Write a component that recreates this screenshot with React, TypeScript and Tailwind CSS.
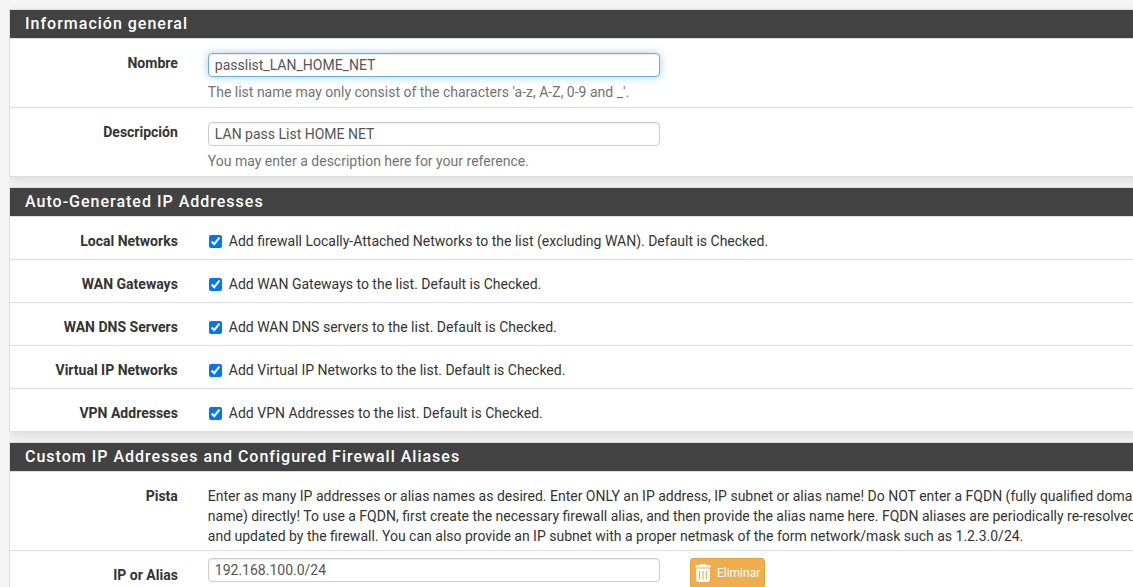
import { useId, useState, type ReactNode } from "react";
import { FaTrashCan } from "react-icons/fa6";

function Panel({ title, children }: { title: string; children: ReactNode }) {
  return (
    <section className="border border-[#ddd] bg-white shadow-[0_4px_10px_0_rgba(0,0,0,0.1)]">
      <h2 className="bg-[#424242] px-[15px] py-1 text-base leading-5 font-medium tracking-[1px] text-white">{title}</h2>
      {children}
    </section>
  );
}

function Row({ label, htmlFor, children }: { label: string; htmlFor?: string; children: ReactNode }) {
  const labelClass = "col-span-2 block px-[15px] pt-3.5 text-right font-bold";
  return (
    <div className="border-t border-[#ddd]">
      <div className="-mx-2.5 grid grid-cols-12">
        {htmlFor ? (
          <label htmlFor={htmlFor} className={labelClass}>
            {label}
          </label>
        ) : (
          <div className={labelClass}>{label}</div>
        )}
        {children}
      </div>
    </div>
  );
}

const inputClass =
  "block h-6 w-full rounded border border-[#ccc] bg-white px-1.5 text-sm text-[#555] shadow-[inset_0_1px_1px_rgba(0,0,0,0.075)] outline-none";
const focusedClass =
  "block h-6 w-full rounded border border-[#66afe9] bg-white px-1.5 text-sm text-[#555] shadow-[inset_0_1px_1px_rgba(0,0,0,0.075),0_0_8px_rgba(102,175,233,0.6)] outline-none";

function TextRow({ label, initial, help, active }: { label: string; initial: string; help: string; active?: boolean }) {
  const id = useId();
  const [value, setValue] = useState(initial);
  return (
    <Row label={label} htmlFor={id}>
      <div className="col-span-5 px-[15px] pt-3.5 pb-[5px]">
        <input
          id={id}
          type="text"
          value={value}
          onChange={(e) => setValue(e.target.value)}
          className={active ? focusedClass : inputClass}
        />
        <p className="mt-[5px] text-[#737373]">{help}</p>
      </div>
    </Row>
  );
}

function CheckRow({ label, text }: { label: string; text: string }) {
  const id = useId();
  return (
    <Row label={label} htmlFor={id}>
      <div className="col-span-10 px-[15px] pt-3.5 pb-2">
        <label className="flex items-center">
          <input id={id} type="checkbox" defaultChecked className="mr-[7px] ml-px size-[13px]" />
          <span>{text}</span>
        </label>
      </div>
    </Row>
  );
}

export default function App() {
  const aliasId = useId();
  const [alias, setAlias] = useState("192.168.100.0/24");
  return (
    <main className="h-screen overflow-hidden bg-[#f5f5f5] pl-[9px] font-['Roboto',sans-serif] text-sm leading-5 text-[#333]">
      <div className="-mr-[15px] flex flex-col gap-2.5 overflow-hidden pt-[9px]">
        <Panel title="Información general">
          <TextRow
            label="Nombre"
            initial="passlist_LAN_HOME_NET"
            help="The list name may only consist of the characters 'a-z, A-Z, 0-9 and _'."
            active
          />
          <TextRow
            label="Descripción"
            initial="LAN pass List HOME NET"
            help="You may enter a description here for your reference."
          />
        </Panel>

        <Panel title="Auto-Generated IP Addresses">
          <CheckRow
            label="Local Networks"
            text="Add firewall Locally-Attached Networks to the list (excluding WAN). Default is Checked."
          />
          <CheckRow label="WAN Gateways" text="Add WAN Gateways to the list. Default is Checked." />
          <CheckRow label="WAN DNS Servers" text="Add WAN DNS servers to the list. Default is Checked." />
          <CheckRow label="Virtual IP Networks" text="Add Virtual IP Networks to the list. Default is Checked." />
          <CheckRow label="VPN Addresses" text="Add VPN Addresses to the list. Default is Checked." />
        </Panel>

        <Panel title="Custom IP Addresses and Configured Firewall Aliases">
          <Row label="Pista">
            <p className="col-span-10 pt-3.5 pr-2 pb-1 pl-[15px]">
              Enter as many IP addresses or alias names as desired. Enter ONLY an IP address, IP subnet or alias name! Do
              NOT enter a FQDN (fully qualified domain name) directly! To use a FQDN, first create the necessary firewall
              alias, and then provide the alias name here. FQDN aliases are periodically re-resolved and updated by the
              firewall. You can also provide an IP subnet with a proper netmask of the form network/mask such as
              1.2.3.0/24.
            </p>
          </Row>
          <Row label="IP or Alias" htmlFor={aliasId}>
            <div className="col-span-5 px-[15px] pt-[7px]">
              <input
                id={aliasId}
                type="text"
                value={alias}
                onChange={(e) => setAlias(e.target.value)}
                className={inputClass}
              />
            </div>
            <div className="col-span-5 px-[15px] py-[7px]">
              <button
                type="button"
                className="flex h-[30px] items-center gap-1.5 rounded-[3px] border border-[#eea236] bg-[#f0ad4e] px-1 text-xs text-white"
              >
                <FaTrashCan className="h-[18px] w-4" />
                Eliminar
              </button>
            </div>
          </Row>
        </Panel>
      </div>
    </main>
  );
}
